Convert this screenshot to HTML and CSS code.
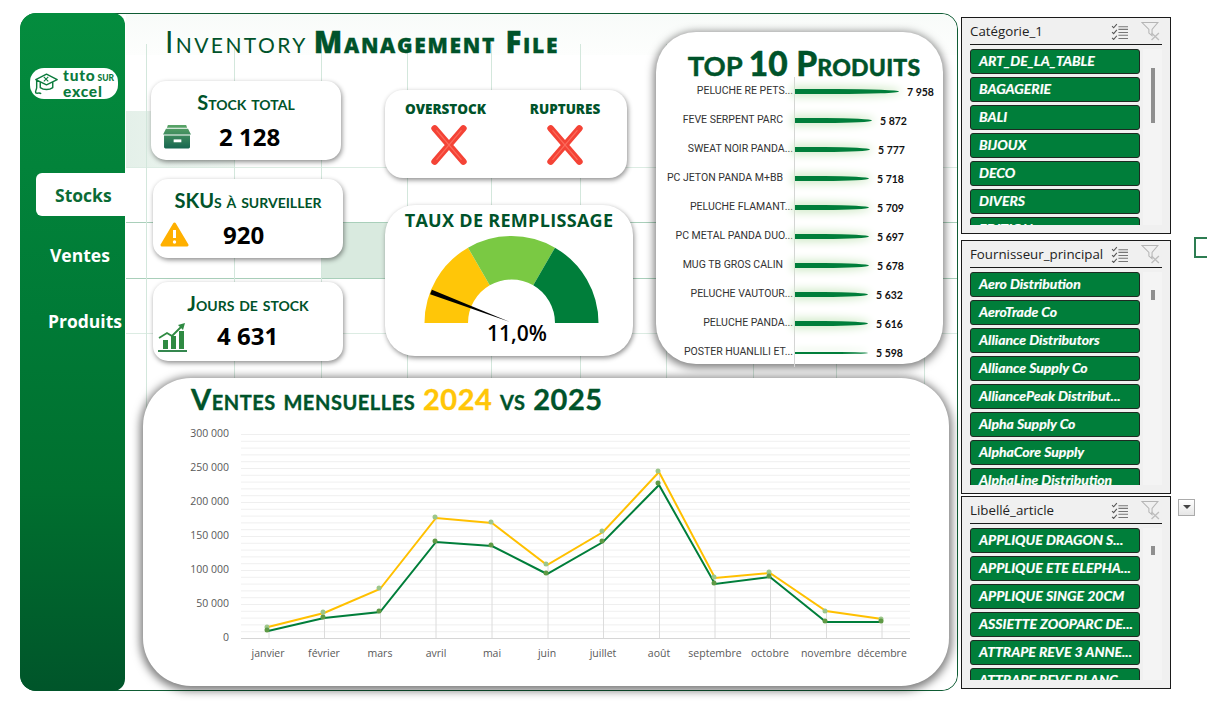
FILE: index.html
```html
<!DOCTYPE html>
<html lang="fr">

<head>
    <meta charset="UTF-8"/>
    <title>Inventory Management File</title>
    <link rel="stylesheet" href="styles.css">
</head>

<body>
    <!-- icones reutilisees -->
    <svg class="defs" aria-hidden="true">
        <symbol id="ico-multi" viewBox="0 0 16 16">
            <path d="M1 3l1.5 1.5L5.5 1M1 8.5L2.5 10l3-3.5M1 14l1.5 1.5 3-3.5" fill="none" stroke="#555" stroke-width="1"/>
            <path d="M7 3.5h9M7 6h9M7 9h9M7 11.5h9M7 14.5h9" fill="none" stroke="#777" stroke-width="1"/>
        </symbol>
        <symbol id="ico-clear" viewBox="0 0 18 18">
            <path d="M.5 .5h15L10 7v6L7 10.5V7z" fill="none" stroke="#b5b5b5" stroke-width="1"/>
            <path d="M9.5 10.5l7 6.5M16.5 10.5l-7 6.5" fill="none" stroke="#bdbdbd" stroke-width="1.3"/>
        </symbol>
        <symbol id="ico-cross" viewBox="0 0 34 38">
            <path d="M4 4l26 30M30 4L4 34" fill="none" stroke="#f44336" stroke-width="6" stroke-linecap="round"/>
            <path d="M6 6l22 26M28 6L6 32" fill="none" stroke="#fb6a5b" stroke-width="1.2" stroke-linecap="round"/>
        </symbol>
    </svg>

    <div class="page">
        <div class="board">
            <!-- menu de gauche -->
            <aside class="sidebar">
                <div class="logo">
                    <svg class="logo-hat" viewBox="0 0 28 26">
                        <path d="M2 8l12-6 12 6-12 6zM7 11v6c4 3 10 3 14 0v-6M3 9v8c0 3-2 3-1 6 2 1 4-1 6 1" fill="none" stroke="#0b7a3c" stroke-width="1.6" stroke-linejoin="round"/>
                        <path d="M11 5l5 5M16 5l-5 5" stroke="#0b7a3c" stroke-width="1.2"/>
                    </svg>
                    <div class="logo-text">
                        <div>tuto<small>SUR</small></div>
                        <div>excel</div>
                    </div>
                </div>
                <nav class="menu">
                    <a class="menu-item active">Stocks</a>
                    <a class="menu-item ventes">Ventes</a>
                    <a class="menu-item produits">Produits</a>
                </nav>
            </aside>

            <main class="main">
                <div class="top">
                    <section class="overview">
                        <h1 class="title">Inventory <b>Management File</b></h1>
                        <div class="columns">
                            <div class="kpis">
                                <div class="card kpi">
                                    <h2>Stock total</h2>
                                    <div class="kpi-row">
                                        <svg class="kpi-icon" viewBox="0 0 30 26">
                                            <defs>
                                                <linearGradient id="box" x1="0" y1="0" x2="0" y2="1">
                                                    <stop offset="0" stop-color="#5aa567"/>
                                                    <stop offset="1" stop-color="#176650"/>
                                                </linearGradient>
                                            </defs>
                                            <path d="M5 1h19l1 3H4zM3 5h23l3 6H0zM1 12h27v12a1.5 1.5 0 0 1-1.5 1.5h-24A1.5 1.5 0 0 1 1 24z" fill="url(#box)"/>
                                            <rect x="11" y="16" width="8" height="3" fill="#fff"/>
                                        </svg>
                                        <div class="kpi-value">2 128</div>
                                    </div>
                                </div>
                                <div class="card kpi second">
                                    <h2>SKUs à surveiller</h2>
                                    <div class="kpi-row">
                                        <svg class="kpi-icon" viewBox="0 0 28 25">
                                            <path d="M14 2L26.5 23H1.5z" fill="#ffb000" stroke="#ffb000" stroke-width="3" stroke-linejoin="round"/>
                                            <path d="M14 8v8" stroke="#fff" stroke-width="3"/>
                                            <circle cx="14" cy="20" r="1.7" fill="#fff"/>
                                        </svg>
                                        <div class="kpi-value">920</div>
                                    </div>
                                </div>
                                <div class="card kpi third">
                                    <h2>Jours de stock</h2>
                                    <div class="kpi-row">
                                        <svg class="kpi-icon" viewBox="0 0 29 30">
                                            <path d="M5 18h5v9H5zM13 14h5v13h-5zM21 9h5v18h-5z" fill="#2f8a42"/>
                                            <path d="M1 16l8-5 5 3 9-9" fill="none" stroke="#2f8a42" stroke-width="1.8"/>
                                            <path d="M20 3l7-2-2 7z" fill="#2f8a42"/>
                                            <path d="M0 29h29" stroke="#1f7a3c" stroke-width="1.8"/>
                                        </svg>
                                        <div class="kpi-value">4 631</div>
                                    </div>
                                </div>
                            </div>

                            <div class="status-col">
                                <div class="card status">
                                    <div class="status-item">
                                        <h3>OVERSTOCK</h3>
                                        <svg class="cross"><use href="#ico-cross"/></svg>
                                    </div>
                                    <div class="status-item">
                                        <h3>RUPTURES</h3>
                                        <svg class="cross"><use href="#ico-cross"/></svg>
                                    </div>
                                </div>
                                <div class="card gauge">
                                    <h2>TAUX DE REMPLISSAGE</h2>
                                    <svg class="gauge-svg" viewBox="385 233 248 123">
                                        <path d="M424.5 323A87 87 0 0 1 468 247.66L489.75 285.33A43.5 43.5 0 0 0 468 323z" fill="#ffc608"/>
                                        <path d="M468 247.66A87 87 0 0 1 555 247.66L533.25 285.33A43.5 43.5 0 0 0 489.75 285.33z" fill="#7ac943"/>
                                        <path d="M555 247.66A87 87 0 0 1 598.5 323H555A43.5 43.5 0 0 0 533.25 285.33z" fill="#007e3a"/>
                                        <path d="M431.9 289.7L510 322 430.1 294.3z" fill="#000"/>
                                        <text class="gauge-value" x="517" y="341" text-anchor="middle">11,0%</text>
                                    </svg>
                                </div>
                            </div>
                        </div>
                    </section>

                    <section class="card top10">
                        <h2>TOP <b>10 Produits</b></h2>
                        <ul class="ranking">
                            <li><span class="name">PELUCHE RE PETS...</span><span class="track"><i class="bar" style="width: 104px"></i><em>7 958</em></span></li>
                            <li><span class="name short">FEVE SERPENT PARC</span><span class="track"><i class="bar" style="width: 77px"></i><em>5 872</em></span></li>
                            <li><span class="name">SWEAT NOIR PANDA...</span><span class="track"><i class="bar" style="width: 75px"></i><em>5 777</em></span></li>
                            <li><span class="name short">PC JETON PANDA M+BB</span><span class="track"><i class="bar" style="width: 74px"></i><em>5 718</em></span></li>
                            <li><span class="name">PELUCHE FLAMANT...</span><span class="track"><i class="bar" style="width: 74px"></i><em>5 709</em></span></li>
                            <li><span class="name">PC METAL PANDA DUO...</span><span class="track"><i class="bar" style="width: 74px"></i><em>5 697</em></span></li>
                            <li><span class="name short">MUG TB GROS CALIN</span><span class="track"><i class="bar" style="width: 74px"></i><em>5 678</em></span></li>
                            <li><span class="name">PELUCHE VAUTOUR...</span><span class="track"><i class="bar" style="width: 73px"></i><em>5 632</em></span></li>
                            <li><span class="name">PELUCHE PANDA...</span><span class="track"><i class="bar" style="width: 73px"></i><em>5 616</em></span></li>
                            <li><span class="name">POSTER HUANLILI ET...</span><span class="track"><i class="bar cut" style="width: 73px"></i><em>5 598</em></span></li>
                        </ul>
                    </section>
                </div>

                <section class="card sales">
                    <h2>Ventes mensuelles <span class="y2024">2024</span> vs 2025</h2>
                    <!-- viewBox = coordonnees de la page -->
                    <svg class="sales-svg" viewBox="143 424 806 262">
                        <defs>
                            <pattern id="grid" x="241" y="434" width="669" height="6.8" patternUnits="userSpaceOnUse">
                                <rect width="669" height="1" fill="#efefef"/>
                            </pattern>
                        </defs>
                        <rect x="241" y="434" width="669" height="204" fill="url(#grid)"/>
                        <path d="M269 627V638M324.5 613V638M380.5 589V638M436 518V638M492 523V638M548 565V638M603.5 532V638M659.5 472V638M715 578V638M770.5 573V638M826.5 611V638M882 619V638" stroke="#dcdcdc"/>
                        <path d="M241 638.5H910" stroke="#d6d6d6"/>

                        <g class="axis-y">
                            <text x="229" y="437">300 000</text>
                            <text x="229" y="471">250 000</text>
                            <text x="229" y="505">200 000</text>
                            <text x="229" y="539">150 000</text>
                            <text x="229" y="573">100 000</text>
                            <text x="229" y="607">50 000</text>
                            <text x="229" y="641">0</text>
                        </g>
                        <g class="axis-x">
                            <text x="268" y="657">janvier</text>
                            <text x="324" y="657">février</text>
                            <text x="380" y="657">mars</text>
                            <text x="436" y="657">avril</text>
                            <text x="492" y="657">mai</text>
                            <text x="547" y="657">juin</text>
                            <text x="603" y="657">juillet</text>
                            <text x="659" y="657">août</text>
                            <text x="715" y="657">septembre</text>
                            <text x="770" y="657">octobre</text>
                            <text x="826" y="657">novembre</text>
                            <text x="882" y="657">décembre</text>
                        </g>

                        <polyline class="line-2024" points="268,627 324,613 380,589 436,518 492,523 547,565 603,532 659,472 715,578 770,573 826,611 882,619"/>
                        <polyline class="line-2025" points="268,631 324,618 380,612 436,542 492,546 547,574 603,542 659,485 715,584 770,577 826,622 882,622"/>

                        <g class="dots-2024">
                            <circle cx="267" cy="627" r="2.5"/><circle cx="323" cy="612" r="2.5"/><circle cx="379" cy="588" r="2.5"/><circle cx="435" cy="517" r="2.5"/><circle cx="491" cy="522" r="2.5"/><circle cx="546" cy="564" r="2.5"/><circle cx="602" cy="531" r="2.5"/><circle cx="658" cy="471" r="2.5"/><circle cx="714" cy="577" r="2.5"/><circle cx="769" cy="572" r="2.5"/><circle cx="825" cy="611" r="2.5"/><circle cx="881" cy="619" r="2.5"/>
                        </g>
                        <g class="dots-2025">
                            <circle cx="267" cy="630" r="2.5"/><circle cx="323" cy="617" r="2.5"/><circle cx="379" cy="611" r="2.5"/><circle cx="435" cy="541" r="2.5"/><circle cx="491" cy="545" r="2.5"/><circle cx="546" cy="573" r="2.5"/><circle cx="602" cy="541" r="2.5"/><circle cx="658" cy="483" r="2.5"/><circle cx="714" cy="583" r="2.5"/><circle cx="769" cy="576" r="2.5"/><circle cx="825" cy="621" r="2.5"/><circle cx="881" cy="621" r="2.5"/>
                        </g>
                    </svg>
                </section>
            </main>
        </div>

        <!-- segments -->
        <div class="slicers">
            <div class="slicer s1">
                <div class="slicer-head">
                    <span>Catégorie_1</span>
                    <svg class="ico-multi"><use href="#ico-multi"/></svg>
                    <svg class="ico-clear"><use href="#ico-clear"/></svg>
                </div>
                <div class="slicer-body">
                    <ul class="items">
                        <li>ART_DE_LA_TABLE</li>
                        <li>BAGAGERIE</li>
                        <li>BALI</li>
                        <li>BIJOUX</li>
                        <li>DECO</li>
                        <li>DIVERS</li>
                        <li>EDITION</li>
                    </ul>
                    <div class="scroll"><div class="thumb"></div></div>
                </div>
            </div>
            <div class="slicer s2">
                <div class="slicer-head">
                    <span>Fournisseur_principal</span>
                    <svg class="ico-multi"><use href="#ico-multi"/></svg>
                    <svg class="ico-clear"><use href="#ico-clear"/></svg>
                </div>
                <div class="slicer-body">
                    <ul class="items">
                        <li>Aero Distribution</li>
                        <li>AeroTrade Co</li>
                        <li>Alliance Distributors</li>
                        <li>Alliance Supply Co</li>
                        <li>AlliancePeak Distribut...</li>
                        <li>Alpha Supply Co</li>
                        <li>AlphaCore Supply</li>
                        <li>AlphaLine Distribution</li>
                    </ul>
                    <div class="scroll"><div class="thumb"></div></div>
                </div>
            </div>
            <div class="slicer s3">
                <div class="slicer-head">
                    <span>Libellé_article</span>
                    <svg class="ico-multi"><use href="#ico-multi"/></svg>
                    <svg class="ico-clear"><use href="#ico-clear"/></svg>
                </div>
                <div class="slicer-body">
                    <ul class="items">
                        <li>APPLIQUE DRAGON S...</li>
                        <li>APPLIQUE ETE ELEPHA...</li>
                        <li>APPLIQUE SINGE 20CM</li>
                        <li>ASSIETTE ZOOPARC DE...</li>
                        <li>ATTRAPE REVE 3 ANNE...</li>
                        <li>ATTRAPE REVE BLANC</li>
                    </ul>
                    <div class="scroll"><div class="thumb"></div></div>
                </div>
            </div>
        </div>

        <!-- objets de la feuille -->
        <div class="stub"></div>
        <div class="drop"></div>
    </div>
</body>

</html>
```

FILE: styles.css
```css
* {
    margin: 0;
    padding: 0;
    box-sizing: border-box;
}

html,
body {
    height: 100%;
    overflow: hidden;
    background: #fff;
}

ul {
    list-style: none;
}

.defs {
    position: absolute;
    width: 0;
    height: 0;
}

.page {
    display: flex;
    padding: 13px 0 0 20px;
    font-family: "Open Sans", "Liberation Sans", sans-serif;
}

.board {
    display: flex;
    width: 938px;
    height: 678px;
    border: 1px solid #0f5c34;
    border-radius: 16px;
    background: #fff;
}

/* menu */
.sidebar {
    width: 105px;
    margin: -1px 1px -1px -1px;
    border-radius: 16px 12px 12px 16px;
    background: linear-gradient(#048c3e, #007a36 45%, #00702f 70%, #00552a);
}

.logo {
    display: flex;
    align-items: center;
    width: 88px;
    height: 31px;
    margin: 55px 0 0 10px;
    padding-left: 4px;
    border-radius: 14px;
    background: #fff;
}

.logo-hat {
    width: 25px;
    height: 24px;
    flex: none;
}

.logo-text {
    margin-left: 4px;
    font: 900 15.5px/13px "Lato", sans-serif;
    color: #0b7a3c;
    letter-spacing: 0.8px;
    white-space: nowrap;
}

.logo-text small {
    margin-left: 2px;
    font-size: 8.5px;
    letter-spacing: 0;
}

.menu {
    display: flex;
    flex-direction: column;
    margin-top: 74px;
}

.menu-item {
    height: 43px;
    padding-left: 30px;
    font-size: 17.5px;
    font-weight: 700;
    line-height: 43px;
    color: #fff;
}

.menu-item.active {
    margin-left: 16px;
    padding-left: 19px;
    border-radius: 6px 0 0 6px;
    background: #fff;
    line-height: 45px;
    color: #0b6b35;
}

.menu-item.ventes {
    margin-top: 18px;
}

.menu-item.produits {
    margin-top: 23px;
    padding-left: 28px;
}

/* zone centrale, avec le quadrillage de la feuille derriere */
.main {
    --v: linear-gradient(#d3e7dc, #d3e7dc);
    --h: linear-gradient(#a9cfba, #a9cfba);
    --h2: linear-gradient(#dcece3, #dcece3);
    flex: 1;
    padding-top: 14px;
    border-radius: 0 16px 16px 0;
    background-color: #fff;
    background-repeat: no-repeat;
    background-image:
        var(--v), var(--v), var(--v), var(--v), var(--v),
        var(--v), var(--v), var(--v), var(--v), var(--v),
        var(--h), var(--h), var(--h2), var(--h2),
        linear-gradient(#d9eadf, #d9eadf),
        linear-gradient(90deg, #e4f0e9, #eef6f1),
        linear-gradient(#f8fbf9, #fdfefd);
    background-size:
        1px 380px, 1px 380px, 1px 380px, 1px 380px, 1px 380px,
        1px 380px, 1px 380px, 1px 380px, 1px 380px, 1px 380px,
        100% 1px, 100% 1px, 100% 1px, 100% 1px,
        86px 56px, 108px 56px, 100% 41px;
    background-position:
        20px 30px, 108px 30px, 195px 30px, 281px 30px, 365px 30px,
        454px 30px, 540px 30px, 627px 30px, 710px 30px, 798px 30px,
        0 208px, 0 264px, 0 153px, 0 319px,
        195px 208px, 0 97px, 0 0;
}

.top {
    display: flex;
}

.overview {
    width: 530px;
}

.title {
    height: 32px;
    margin-left: 39px;
    font: 400 30px/26px "Lato", sans-serif;
    font-variant: small-caps;
    letter-spacing: 2.4px;
    color: #00532a;
    white-space: nowrap;
}

.title b {
    margin-left: -4px;
    font: 800 29.5px/26px "Open Sans", sans-serif;
    font-variant: small-caps;
    letter-spacing: 1.7px;
    -webkit-text-stroke: 0.3px #00532a;
}

.columns {
    display: flex;
    margin-top: 21px;
    padding-left: 25px;
}

.card {
    background: #fff;
    box-shadow: 1px 2px 5px rgba(0, 0, 0, 0.45);
}

/* indicateurs */
.kpis {
    width: 192px;
    margin-right: 42px;
    flex: none;
}

.kpi {
    width: 190px;
    height: 79px;
    padding-top: 9px;
    border-radius: 15px;
}

.kpi.second {
    margin: 19px 0 0 2px;
}

.kpi.third {
    margin: 24px 0 0 2px;
}

.kpi h2 {
    font: 700 20px/24px "Lato", sans-serif;
    font-variant: small-caps;
    text-align: center;
    color: #00532a;
}

.kpi-row {
    display: flex;
    align-items: center;
    height: 34px;
    margin-top: 5px;
    padding-left: 12px;
}

.kpi-icon {
    width: 29px;
    height: 25px;
    flex: none;
}

.kpi-value {
    margin-left: 27px;
    font-size: 24px;
    font-weight: 700;
    color: #000;
}

.second .kpi-row {
    padding-left: 7px;
}

.second .kpi-value {
    margin-left: 34px;
}

.third .kpi-row {
    padding-left: 5px;
}

.third .kpi-icon {
    height: 30px;
}

.third .kpi-value {
    margin: 0 0 4px 30px;
}

/* statuts et jauge */
.status-col {
    flex: none;
    padding-top: 9px;
}

.status {
    display: grid;
    grid-template-columns: 116px 116px;
    width: 242px;
    height: 88px;
    padding: 11px 0 0 6px;
    border-radius: 18px;
}

.status-item {
    text-align: center;
}

.status h3 {
    font-size: 13.5px;
    font-weight: 800;
    line-height: 16px;
    color: #00532a;
}

.status-item:first-child h3 {
    margin-right: 7px;
}

.cross {
    display: block;
    width: 38px;
    height: 42px;
    margin: 7px auto 0;
}

.gauge {
    width: 248px;
    height: 151px;
    margin-top: 27px;
    border-radius: 30px;
}

.gauge h2 {
    padding-top: 3px;
    font-size: 18px;
    font-weight: 700;
    line-height: 24px;
    letter-spacing: 0.3px;
    text-align: center;
    color: #00532a;
}

.gauge-svg {
    display: block;
    width: 248px;
    height: 123px;
    margin-top: 1px;
}

.gauge-value {
    font-size: 21px;
    font-weight: 600;
    fill: #000;
}

/* top 10 */
.top10 {
    width: 287px;
    height: 332px;
    margin-top: 4px;
    border-radius: 40px;
    box-shadow: 0 2px 8px 2px rgba(0, 0, 0, 0.5);
}

.top10 h2 {
    height: 45px;
    padding: 16px 0 0 9px;
    font: 700 27.5px/30px "Lato", sans-serif;
    text-align: center;
    color: #00532a;
    -webkit-text-stroke: 0.4px #00532a;
}

.top10 h2 b {
    font-size: 33.5px;
    font-weight: 900;
    font-variant: small-caps;
    letter-spacing: 0.2px;
}

.ranking li {
    display: flex;
    align-items: center;
    height: 29px;
}

.name {
    width: 138px;
    padding: 0 1px 3px 0;
    font: 400 10.5px "Roboto", sans-serif;
    text-align: right;
    white-space: nowrap;
    color: #333;
}

.name.short {
    padding-right: 11px;
}

.track {
    display: flex;
    align-items: center;
    height: 29px;
    flex: 1;
    border-left: 1px solid #d4d4d4;
}

.bar {
    display: block;
    height: 5px;
    border-radius: 0 60% 60% 0 / 0 50% 50% 0;
    background: #007e3a;
    box-shadow: 0 0 9px 3px #d3ebca;
}

.bar.cut {
    height: 2px;
    box-shadow: 0 -3px 6px #dcefd6;
}

.track em {
    margin-left: 8px;
    font: 700 10.5px "Lato", sans-serif;
    color: #111;
}

/* ventes */
.sales {
    width: 806px;
    height: 308px;
    margin: 14px 0 0 17px;
    border-radius: 48px;
    box-shadow: 0 2px 8px 3px rgba(0, 0, 0, 0.5);
}

.sales h2 {
    height: 46px;
    padding: 3px 0 0 48px;
    font: 700 29px/36px "Lato", sans-serif;
    font-variant: small-caps;
    letter-spacing: 0.55px;
    color: #00532a;
    -webkit-text-stroke: 0.35px #00532a;
}

.y2024 {
    color: #ffc608;
    -webkit-text-stroke: 0.35px #ffc608;
}

.sales-svg {
    display: block;
    width: 806px;
    height: 262px;
}

.axis-y text,
.axis-x text {
    font-size: 10.5px;
    fill: #595959;
}

.axis-y text {
    text-anchor: end;
}

.axis-x text {
    text-anchor: middle;
}

.line-2024,
.line-2025 {
    fill: none;
    stroke-width: 2;
}

.line-2024 {
    stroke: #ffc000;
}

.line-2025 {
    stroke: #007e3a;
}

.dots-2024 {
    fill: #9cc68a;
}

.dots-2025 {
    fill: #5f9a45;
}

/* segments */
.slicers {
    width: 210px;
    margin: 4px 0 0 3px;
    flex: none;
}

.slicer {
    display: flex;
    flex-direction: column;
    padding: 0 8px 8px;
    border: 1px solid #1a1a1a;
    background: #f0f0f0;
}

.s1 {
    height: 217px;
}

.s2 {
    height: 254px;
    margin-top: 6px;
}

.s3 {
    height: 193px;
    margin-top: 2px;
}

.slicer-head {
    display: flex;
    align-items: center;
    height: 27px;
    flex: none;
    border-bottom: 1px solid #1a1a1a;
    font-size: 13.3px;
    color: #222;
}

.slicer-head span {
    flex: 1;
    white-space: nowrap;
}

.ico-multi {
    width: 17px;
    height: 17px;
}

.ico-clear {
    width: 20px;
    height: 19px;
    margin: 0 1px 0 13px;
}

.slicer-body {
    display: flex;
    flex: 1;
    min-height: 0;
    margin-top: 4px;
    overflow: hidden;
}

.items {
    width: 170px;
    flex: none;
}

.items li {
    height: 25px;
    margin-bottom: 3px;
    padding-left: 8px;
    border: 1px solid #1e2a22;
    border-radius: 3px;
    background: #007e3a;
    font: italic 700 14px/22px "Lato", sans-serif;
    color: #fff;
    white-space: nowrap;
    -webkit-text-stroke: 0.2px #fff;
}

.scroll {
    flex: 1;
    margin-left: 3px;
    padding-left: 8px;
    background: #f4f4f4;
}

.thumb {
    width: 4px;
    background: #8f8f8f;
}

.s1 .thumb {
    height: 55px;
    margin-top: 19px;
}

.s2 .thumb {
    height: 10px;
    margin-top: 18px;
}

.s3 .thumb {
    height: 9px;
    margin-top: 18px;
}

/* bouts d'objets hors du tableau */
.stub {
    position: absolute;
    left: 1194px;
    top: 237px;
    width: 30px;
    height: 21px;
    border: 2px solid #2d7d52;
}

.drop {
    position: absolute;
    left: 1178px;
    top: 499px;
    width: 17px;
    height: 17px;
    border: 1px solid #ababab;
    background: linear-gradient(#fff, #e6e6e6);
}

.drop::after {
    content: "";
    position: absolute;
    left: 4px;
    top: 5px;
    border: 4px solid transparent;
    border-top-color: #444;
}
```
